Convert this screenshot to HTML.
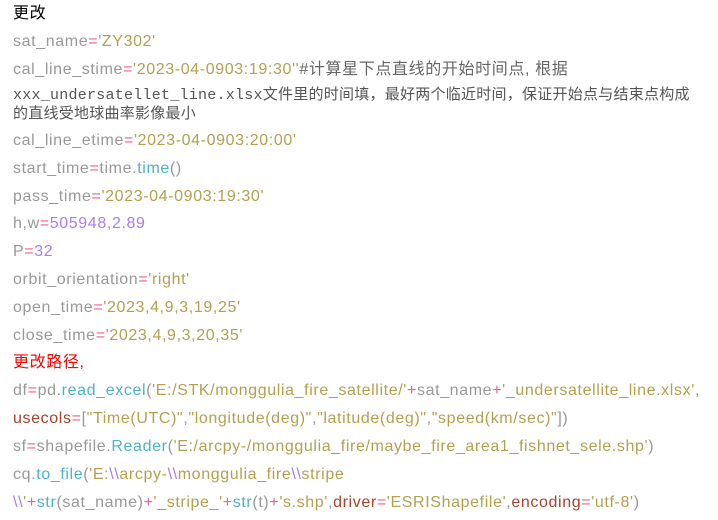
<!DOCTYPE html>
<html><head><meta charset="utf-8"><style>
body{margin:0;width:718px;height:520px;background:#fff;overflow:hidden;position:relative;font-family:"Liberation Sans","Noto Sans CJK SC",sans-serif;font-size:16px;letter-spacing:0.62px;color:#999}
.l{position:absolute;left:13px;white-space:nowrap;line-height:20px}
.o{color:#f06090}.s{color:#b5a050}.b{color:#4eb2c8}.n{color:#a97ef3}.k{color:#a8422a}.r{color:#f00}
.m{font-family:"Liberation Mono","Noto Sans CJK SC",monospace;font-size:15px;letter-spacing:0.25px;color:#555}
</style></head><body>
<div class="l" style="top:4px;color:#000">更改</div>
<div class="l" style="top:32px">sat_name<span class="o">=</span><span class="s">'ZY302'</span></div>
<div class="l" style="top:60px">cal_line_stime<span class="o">=</span><span class="s">'2023-04-0903:19:30''</span><span style="color:#666">#计算星下点直线的开始时间点, 根据</span></div>
<div class="l m" style="top:86px">xxx_undersatellet_line.xlsx文件里的时间填，最好两个临近时间，保证开始点与结束点构成</div>
<div class="l m" style="top:105px">的直线受地球曲率影像最小</div>
<div class="l" style="top:131px">cal_line_etime<span class="o">=</span><span class="s">'2023-04-0903:20:00'</span></div>
<div class="l" style="top:159px">start_time<span class="o">=</span>time.<span class="b">time</span>()</div>
<div class="l" style="top:187px">pass_time<span class="o">=</span><span class="s">'2023-04-0903:19:30'</span></div>
<div class="l" style="top:214px">h,w<span class="o">=</span><span class="n">505948</span>,<span class="n">2.89</span></div>
<div class="l" style="top:242px">P<span class="o">=</span><span class="n">32</span></div>
<div class="l" style="top:270px">orbit_orientation<span class="o">=</span><span class="s">'right'</span></div>
<div class="l" style="top:298px">open_time<span class="o">=</span><span class="s">'2023,4,9,3,19,25'</span></div>
<div class="l" style="top:326px">close_time<span class="o">=</span><span class="s">'2023,4,9,3,20,35'</span></div>
<div class="l r" style="top:353px">更改路径,</div>
<div class="l" style="top:381px">df<span class="o">=</span>pd.<span class="b">read_excel</span>(<span class="s">'E:/STK/monggulia_fire_satellite/'</span><span class="o">+</span>sat_name<span class="o">+</span><span class="s">'_undersatellite_line.xlsx'</span>,</div>
<div class="l" style="top:409px"><span class="k">usecols</span><span class="o">=</span>[<span class="s">"Time(UTC)"</span>,<span class="s">"longitude(deg)"</span>,<span class="s">"latitude(deg)"</span>,<span class="s">"speed(km/sec)"</span>])</div>
<div class="l" style="top:437px">sf<span class="o">=</span>shapefile.<span class="b">Reader</span>(<span class="s">'E:/arcpy-/monggulia_fire/maybe_fire_area1_fishnet_sele.shp'</span>)</div>
<div class="l" style="top:465px">cq.<span class="b">to_file</span>(<span class="s">'E:</span><span class="n">\\</span><span class="s">arcpy-</span><span class="n">\\</span><span class="s">monggulia_fire</span><span class="n">\\</span><span class="s">stripe</span></div>
<div class="l" style="top:493px"><span class="n">\\</span><span class="s">'</span><span class="o">+</span><span class="b">str</span>(sat_name)<span class="o">+</span><span class="s">'_stripe_'</span><span class="o">+</span><span class="b">str</span>(t)<span class="o">+</span><span class="s">'s.shp'</span>,<span class="k">driver</span><span class="o">=</span><span class="s">'ESRIShapefile'</span>,<span class="k">encoding</span><span class="o">=</span><span class="s">'utf-8'</span>)</div>
</body></html>
